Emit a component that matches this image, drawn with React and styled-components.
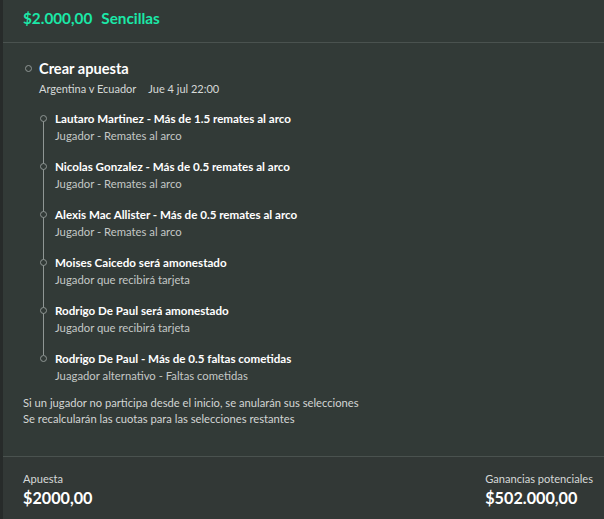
import React from "react";
import styled, { createGlobalStyle } from "styled-components";

const Global = createGlobalStyle`
  html, body { margin: 0; padding: 0; background: #323a37; }
  body { font-family: Lato, "Noto Sans", sans-serif; -webkit-font-smoothing: antialiased; }
  * { box-sizing: border-box; }
`;

const Shell = styled.div`
  width: 604px;
  height: 519px;
  display: flex;
  background: #323a37;
  overflow: hidden;
`;

const Edge = styled.div`
  width: 3px;
  flex: none;
  background: #272b2a;
`;

const Panel = styled.div`
  flex: 1;
  display: flex;
  flex-direction: column;
`;

const Header = styled.div`
  height: 43px;
  padding: 0 20px 6px 20px;
  display: flex;
  align-items: center;
  gap: 9px;
  border-bottom: 1px solid #4a524f;
  color: #1be8a8;
  font-weight: 700;
  font-size: 15.3px;
`;

const Body = styled.div`
  flex: 1;
  padding: 16px 20px 0 20px;
  display: flex;
  flex-direction: column;
`;

const TopRow = styled.div`
  display: flex;
  align-items: center;
  gap: 7px;
  color: #fff;
  font-weight: 700;
  font-size: 14.6px;
  height: 18px;
`;

const Ring = styled.span`
  width: 7px;
  height: 7px;
  border-radius: 50%;
  border: 1px solid #8f9694;
  flex: none;
  margin-left: ${(p) => p.$offset || 0}px;
`;

const Meta = styled.div`
  margin: 4px 0 0 16px;
  color: #d6d9d8;
  font-size: 11px;
  line-height: 16px;
  display: flex;
  gap: 12px;
`;

const Timeline = styled.div`
  position: relative;
  margin: 13px 0 0 0;
  display: flex;
  flex-direction: column;
  gap: 13px;
`;

/* vertical connector running from the first leg's dot to the last one */
const Rail = styled.div`
  position: absolute;
  left: 20px;
  top: 11px;
  bottom: 30px;
  width: 1px;
  background: #8f9694;
`;

const Leg = styled.div`
  display: grid;
  grid-template-columns: 32px 1fr;
  position: relative;
`;

const Dot = styled.span`
  grid-row: 1;
  grid-column: 1;
  justify-self: start;
  align-self: center;
  width: 7px;
  height: 7px;
  margin-left: 17px;
  border-radius: 50%;
  border: 1px solid #8f9694;
  background: #323a37;
  position: relative;
  z-index: 1;
`;

const LegTitle = styled.div`
  grid-column: 2;
  color: #fff;
  font-weight: 700;
  font-size: 11.6px;
  line-height: 17px;
`;

const LegSub = styled.div`
  grid-column: 2;
  color: #c4c8c6;
  font-size: 11.3px;
  line-height: 18px;
`;

const Notes = styled.div`
  margin-top: 10px;
  color: #d2d5d4;
  font-size: 11.2px;
  line-height: 16px;
`;

const Footer = styled.div`
  height: 63px;
  border-top: 1px solid #4a524f;
  padding: 14px 11px 0 20px;
  display: flex;
  justify-content: space-between;
  background: #323836;
`;

const Stat = styled.div`
  display: flex;
  flex-direction: column;
  gap: 1px;
`;

const StatLabel = styled.div`
  color: #d6d9d8;
  font-size: 11.1px;
  line-height: 16px;
`;

const StatValue = styled.div`
  color: #fff;
  font-weight: 700;
  font-size: 16.2px;
  line-height: 20px;
`;

const legs = [
  ["Lautaro Martinez - Más de 1.5 remates al arco", "Jugador - Remates al arco"],
  ["Nicolas Gonzalez - Más de 0.5 remates al arco", "Jugador - Remates al arco"],
  ["Alexis Mac Allister - Más de 0.5 remates al arco", "Jugador - Remates al arco"],
  ["Moises Caicedo será amonestado", "Jugador que recibirá tarjeta"],
  ["Rodrigo De Paul será amonestado", "Jugador que recibirá tarjeta"],
  ["Rodrigo De Paul - Más de 0.5 faltas cometidas", "Juagador alternativo - Faltas cometidas"],
];

export default function App() {
  return (
    <>
      <Global />
      <Shell>
        <Edge />
        <Panel>
          <Header>
            <span>$2.000,00</span>
            <span>Sencillas</span>
          </Header>
          <Body>
            <TopRow>
              <Ring $offset={2} />
              <span>Crear apuesta</span>
            </TopRow>
            <Meta>
              <span>Argentina v Ecuador</span>
              <span>Jue 4 jul 22:00</span>
            </Meta>
            <Timeline>
              <Rail />
              {legs.map(([title, sub]) => (
                <Leg key={title}>
                  <Dot />
                  <LegTitle>{title}</LegTitle>
                  <LegSub>{sub}</LegSub>
                </Leg>
              ))}
            </Timeline>
            <Notes>
              <div>Si un jugador no participa desde el inicio, se anularán sus selecciones</div>
              <div>Se recalcularán las cuotas para las selecciones restantes</div>
            </Notes>
          </Body>
          <Footer>
            <Stat>
              <StatLabel>Apuesta</StatLabel>
              <StatValue>$2000,00</StatValue>
            </Stat>
            <Stat>
              <StatLabel>Ganancias potenciales</StatLabel>
              <StatValue>$502.000,00</StatValue>
            </Stat>
          </Footer>
        </Panel>
      </Shell>
    </>
  );
}
